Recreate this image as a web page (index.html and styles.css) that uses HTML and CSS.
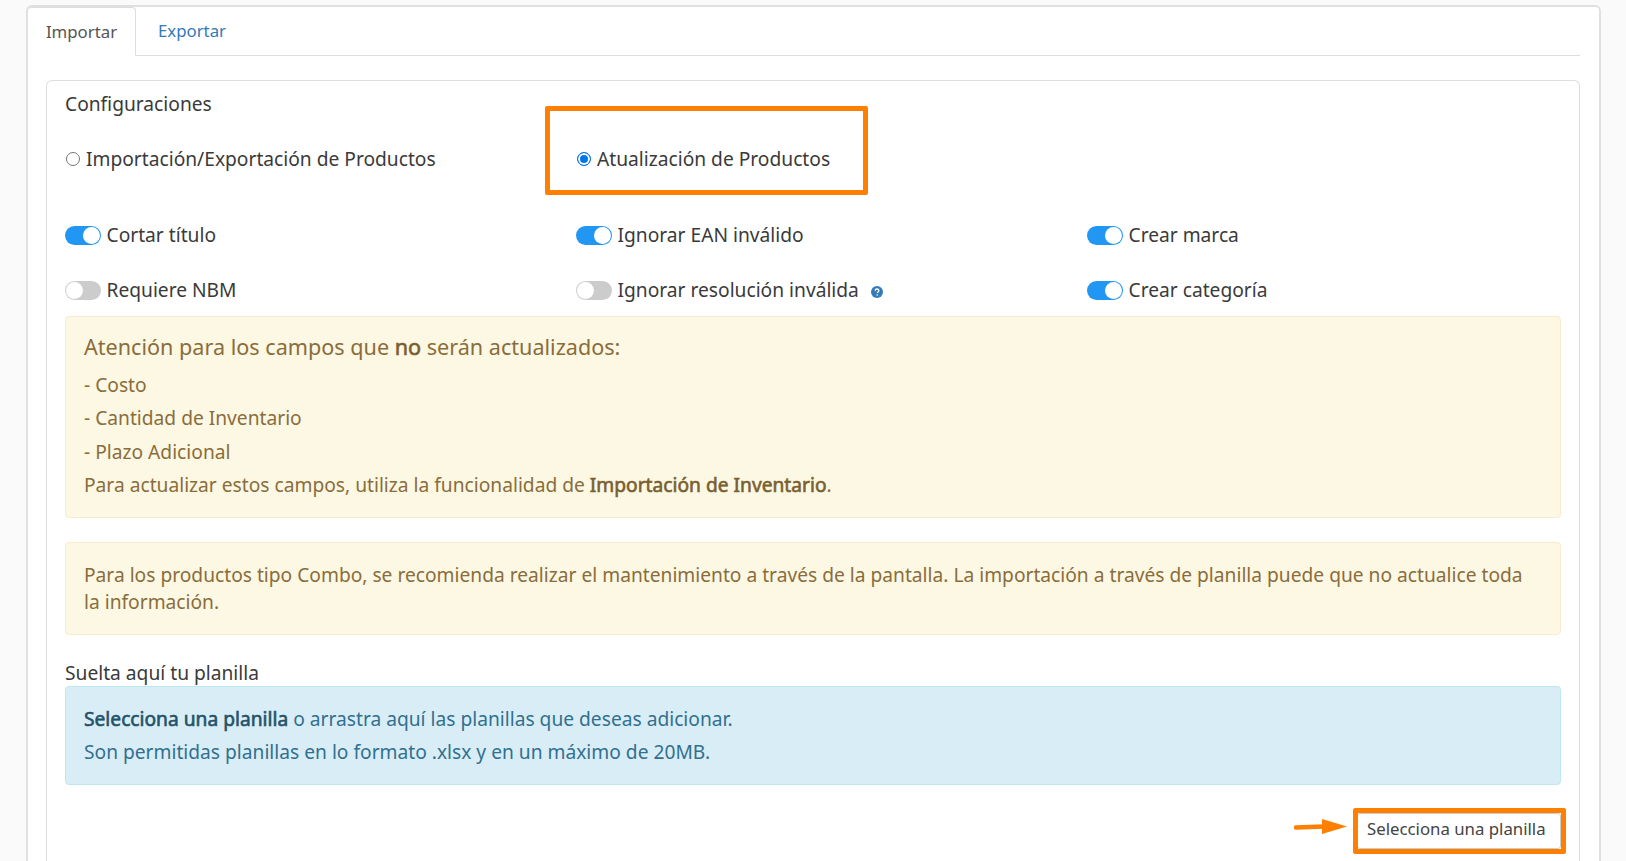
FILE: index.html
```html
<!DOCTYPE html>
<html lang="es">
<head>
<meta charset="utf-8">
<title>Importar</title>
<link rel="stylesheet" href="styles.css">
</head>
<body>
<main class="card">
  <nav class="tabs">
    <a class="tab active">Importar</a>
    <a class="tab">Exportar</a>
  </nav>
  <section class="panel">
    <h2 class="title">Configuraciones</h2>
    <div class="grid radios">
      <label class="opt"><span class="radio"></span>Importación/Exportación de Productos</label>
      <label class="opt"><span class="radio on"></span>Atualización de Productos</label>
      <span></span>
    </div>
    <div class="grid toggles">
      <label class="opt"><span class="switch on"></span>Cortar título</label>
      <label class="opt"><span class="switch on"></span>Ignorar EAN inválido</label>
      <label class="opt"><span class="switch on"></span>Crear marca</label>
      <label class="opt"><span class="switch"></span>Requiere NBM</label>
      <label class="opt"><span class="switch"></span>Ignorar resolución inválida<svg class="help" viewBox="0 0 12 12" width="12" height="12"><circle cx="6" cy="6" r="6" fill="#337ab7"/><path d="M4.100 4.700C4.200 3.600 5 3 6 3c1.100 0 1.900.6 1.900 1.600 0 .8-.5 1.100-1 1.500-.4.3-.6.5-.6 1" fill="none" stroke="#fff" stroke-width="1.300"/><circle cx="6.200" cy="9" r=".8" fill="#fff"/></svg></label>
      <label class="opt"><span class="switch on"></span>Crear categoría</label>
    </div>
    <div class="alert warn first">
      <h4 class="alert-title">Atención para los campos que <b>no</b> serán actualizados:</h4>
      <p class="item">- Costo</p>
      <p class="item">- Cantidad de Inventario</p>
      <p class="item">- Plazo Adicional</p>
      <p class="item">Para actualizar estos campos, utiliza la funcionalidad de <b>Importación de Inventario</b>.</p>
    </div>
    <div class="alert warn second">Para los productos tipo Combo, se recomienda realizar el mantenimiento a través de la pantalla. La importación a través de planilla puede que no actualice toda la información.</div>
    <div class="drop-label">Suelta aquí tu planilla</div>
    <div class="alert info">
      <p class="item"><b>Selecciona una planilla</b> o arrastra aquí las planillas que deseas adicionar.</p>
      <p class="item">Son permitidas planillas en lo formato .xlsx y en un máximo de 20MB.</p>
    </div>
    <div class="actions">
      <button class="btn">Selecciona una planilla</button>
    </div>
  </section>
</main>
<div class="mark mark-radio"></div>
<div class="mark mark-btn"></div>
<svg class="arrow" viewBox="0 0 54 16" width="54" height="16"><path d="M2 8.500L30 7.500" stroke="#ff8000" stroke-width="4.500" stroke-linecap="round"/><path d="M28 0L53 7.500L28 15Z" fill="#ff8000"/></svg>
</body>
</html>
```
FILE: styles.css
```css
* { box-sizing: border-box; }
html, body { height: 861px; overflow: hidden; }
body {
  margin: 0;
  background: #fafafa;
  font-family: "Noto Sans", "Open Sans", sans-serif;
  font-size: 19.2px;
  color: #3a3a3a;
  position: relative;
}
b {
  font-weight: 400;
  -webkit-text-stroke: 0.6px currentColor;
}
.warn b { color: #7a5f30; }
.info b { color: #245269; }
.card {
  margin: 5px 0 0 26px;
  width: 1575px;
  height: 856px;
  background: #fff;
  border: 2px solid #e0e0e0;
  border-bottom: 0;
  border-radius: 6px 6px 0 0;
  padding: 0 19px 0 0;
}
.tabs {
  display: flex;
  height: 49px;
  border-bottom: 1px solid #ddd;
}
.tab {
  height: 49px;
  font-size: 16.8px;
  line-height: 47px;
  color: #337ab7;
}
.tab.active {
  width: 108px;
  text-align: center;
  color: #555;
  background: #fff;
  border: 1px solid #ddd;
  border-left: 0;
  border-bottom-color: #fff;
  border-radius: 4px 4px 0 0;
  margin-right: 22px;
}
.panel {
  margin: 24px 0 0 18px;
  border: 1px solid #ddd;
  border-bottom: 0;
  border-radius: 6px 6px 0 0;
  padding: 0 18px;
  height: 781px;
}
.title {
  margin: 0;
  font-size: 19.2px;
  font-weight: 400;
  line-height: 24px;
  padding-top: 11px;
  height: 35px;
}
.grid {
  display: grid;
  grid-template-columns: repeat(3, 511px);
}
.radios { margin-top: 23px; height: 40px; align-items: center; }
.toggles { margin-top: 44px; row-gap: 31px; }
.opt {
  display: flex;
  align-items: center;
  height: 24px;
  font-size: 19.2px;
  line-height: 24px;
  white-space: nowrap;
}
.radio {
  width: 14px;
  height: 14px;
  border: 1px solid #767676;
  border-radius: 50%;
  margin: 0 6px 0 1px;
  flex: none;
  background: #fff;
}
.radio.on {
  border: 1.5px solid #0075e8;
  background: #0075e8;
  box-shadow: inset 0 0 0 2px #fff;
}
.switch {
  position: relative;
  width: 36px;
  height: 19px;
  border-radius: 10px;
  background: #ccc;
  margin-right: 5.5px;
  flex: none;
}
.switch::after {
  content: "";
  position: absolute;
  left: 1px;
  top: 1px;
  width: 17px;
  height: 17px;
  border-radius: 50%;
  background: #fff;
}
.switch.on { background: #2196f3; }
.switch.on::after { left: 18px; }
.help { margin-left: 12px; margin-top: 3px; }
.alert {
  border: 1px solid;
  border-radius: 4px;
  font-size: 19.2px;
  padding: 0 18px;
}
.warn { background: #fcf8e3; border-color: #faebcc; color: #8a6d3b; }
.info { background: #d9edf7; border-color: #bce8f1; color: #31708f; height: 99px; padding-top: 20px; }
.first { margin-top: 14px; height: 202px; padding-top: 15px; }
.second { margin-top: 24px; height: 93px; padding-top: 18px; line-height: 27px; }
.alert-title {
  margin: 0 0 12px;
  font-size: 21.6px;
  font-weight: 400;
  line-height: 29px;
}
.item { margin: 0 0 9.4px; line-height: 24px; }
.drop-label { margin-top: 26px; line-height: 24px; height: 25px; }
.actions { display: flex; justify-content: flex-end; margin-top: 28px; }
.btn {
  width: 204px;
  height: 36px;
  background: #fff;
  border: 1px solid #ccc;
  border-radius: 3px;
  color: #444;
  font: 16.8px "Noto Sans", sans-serif;
  text-align: left;
  padding: 0 0 5px 9px;
}
.mark {
  position: absolute;
  border: 5px solid #ff8000;
  border-radius: 2px;
}
.mark-radio { left: 545px; top: 106px; width: 323px; height: 89px; }
.mark-btn { left: 1353px; top: 808px; width: 213px; height: 46px; }
.arrow { position: absolute; left: 1294px; top: 819px; }
```
